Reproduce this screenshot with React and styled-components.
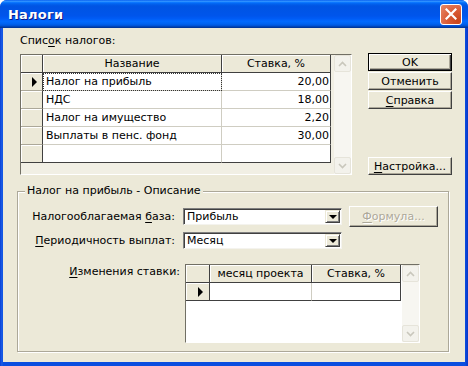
import React from "react";
import styled, { createGlobalStyle, css } from "styled-components";

const GlobalStyle = createGlobalStyle`
  html, body { margin: 0; padding: 0; background: #ffffff; }
  body { font-family: "DejaVu Sans", "Liberation Sans", sans-serif; font-size: 11px; color: #000; }
  * { box-sizing: border-box; }
`;

const Window = styled.div`
  width: 468px;
  height: 366px;
  display: flex;
  flex-direction: column;
  background: linear-gradient(to right, #0a3fd4 0px, #1c5fe8 2px, #0a4ee0 3px, #0a4ee0 465px, #0836c8 468px);
  border-radius: 7px 7px 0 0;
  overflow: hidden;
`;

const TitleBar = styled.div`
  height: 28px;
  flex: none;
  display: flex;
  align-items: center;
  justify-content: space-between;
  padding: 0 6px 0 8px;
  background: linear-gradient(
    to bottom,
    #0058ee 0%,
    #3593ff 4%,
    #288eff 6%,
    #127dff 8%,
    #036ffc 10%,
    #0262ee 14%,
    #0057e5 20%,
    #0054e3 24%,
    #0055eb 56%,
    #005bf5 66%,
    #026afe 76%,
    #0062ef 86%,
    #0052d6 92%,
    #0040ab 96%,
    #003092 100%
  );
`;

const Title = styled.span`
  color: #ffffff;
  font-weight: bold;
  font-size: 13px;
  font-family: "DejaVu Sans", "Liberation Sans", sans-serif;
  text-shadow: 1px 1px 0 #0a1883;
  letter-spacing: 0.2px;
`;

const CloseButton = styled.div`
  width: 22px;
  height: 21px;
  border: 1px solid #ffffff;
  border-radius: 3px;
  background: radial-gradient(circle at 85% 85%, #c8451b 0%, #d95b35 45%, #e88a6a 100%);
  display: flex;
  align-items: center;
  justify-content: center;
`;

const Client = styled.div`
  flex: 1;
  margin: 0 3px 4px 3px;
  background: #ece9d8;
  padding: 6px 0 0 14px;
  display: flex;
  flex-direction: column;
`;

const TopSection = styled.div`
  display: flex;
  gap: 16px;
  padding-left: 3px;
`;

const LeftCol = styled.div`
  width: 332px;
  display: flex;
  flex-direction: column;
`;

const Caption = styled.div`
  line-height: 14px;
  margin-bottom: 6px;
  white-space: nowrap;
`;

const ButtonCol = styled.div`
  width: 84px;
  display: flex;
  flex-direction: column;
  gap: 1px;
  padding-top: 19px;
`;

const Button = styled.button`
  width: ${(p) => p.$w || 84}px;
  height: ${(p) => p.$h || 18}px;
  padding: 0;
  margin: 0;
  font: inherit;
  font-size: 11px;
  color: #000;
  background: #ece9d8;
  border: 1px solid;
  border-color: #ffffff #404040 #404040 #ffffff;
  box-shadow: inset -1px -1px 0 #aca899;
  display: flex;
  align-items: center;
  justify-content: center;
  white-space: nowrap;
  ${(p) =>
    p.$default &&
    css`
      border-color: #000;
      box-shadow: inset 1px 1px 0 #fff, inset -1px -1px 0 #404040, inset -2px -2px 0 #aca899;
    `}
  ${(p) =>
    p.$bottom &&
    css`
      margin-top: auto;
    `}
  ${(p) =>
    p.disabled &&
    css`
      color: #aca899;
      text-shadow: 1px 1px 0 #ffffff;
    `}
`;

const U = styled.span`
  text-decoration: underline;
  text-underline-offset: 2px;
`;

const Grid = styled.div`
  width: ${(p) => p.$w}px;
  height: ${(p) => p.$h}px;
  display: flex;
  align-items: stretch;
  border: 1px solid;
  border-color: #716f64 #ffffff #ffffff #716f64;
  background: ${(p) => p.$bg};
`;

const DataArea = styled.div`
  display: grid;
  grid-template-columns: ${(p) => p.$cols};
  grid-auto-rows: 18px;
  align-self: flex-start;
  flex: none;
`;

const Filler = styled.div`
  flex: 1;
`;

const HeadCell = styled.div`
  background: #ece9d8;
  border-right: 1px solid #404040;
  border-bottom: 1px solid #404040;
  box-shadow: inset 1px 1px 0 #ffffff;
  display: flex;
  align-items: center;
  justify-content: center;
  white-space: nowrap;
  overflow: hidden;
`;

const IndicatorCell = styled.div`
  background: #ece9d8;
  border-right: 1px solid #404040;
  border-bottom: 1px solid ${(p) => (p.$last ? "#404040" : "#aca899")};
  box-shadow: inset 1px 1px 0 #ffffff;
  display: flex;
  align-items: center;
  justify-content: flex-end;
  padding-right: ${(p) => p.$pr || 5}px;
`;

const Arrow = styled.span`
  width: 0;
  height: 0;
  border-left: 5px solid #000;
  border-top: 5px solid transparent;
  border-bottom: 5px solid transparent;
`;

const DataCell = styled.div`
  background: #ffffff;
  border-right: 1px solid ${(p) => (p.$edge ? "#404040" : "#cfcdc2")};
  border-bottom: 1px solid ${(p) => (p.$last ? "#404040" : "#cfcdc2")};
  display: flex;
  align-items: center;
  justify-content: ${(p) => (p.$right ? "flex-end" : "flex-start")};
  padding: ${(p) => (p.$right ? "0 1px 0 0" : "0 0 0 3px")};
  white-space: nowrap;
  overflow: hidden;
  ${(p) =>
    p.$focus &&
    css`
      outline: 1px dotted #333;
      outline-offset: -1px;
    `}
`;

const ScrollBar = styled.div`
  width: 17px;
  flex: none;
  display: flex;
  flex-direction: column;
  justify-content: space-between;
  background: #f7f6f1;
`;

const ScrollBtn = styled.div`
  height: 17px;
  display: flex;
  align-items: center;
  justify-content: center;
  background: #f3f2ec;
  border: 1px solid #e6e4da;
  border-radius: 2px;
`;

const Group = styled.fieldset`
  margin: 9px 0 0 0;
  width: 432px;
  min-width: 0;
  padding: 0 0 8px 0;
  border: 1px solid #aca899;
  box-shadow: inset 1px 1px 0 #ffffff, 1px 1px 0 #ffffff;
`;

const Legend = styled.legend`
  margin-left: 7px;
  padding: 0 2px;
  line-height: 14px;
  background: #ece9d8;
  white-space: nowrap;
`;

const FormRow = styled.div`
  display: flex;
  align-items: ${(p) => (p.$top ? "flex-start" : "center")};
  gap: ${(p) => p.$gap}px;
  margin-top: ${(p) => p.$mt}px;
`;

const Label = styled.div`
  width: ${(p) => p.$w}px;
  text-align: right;
  line-height: 14px;
  white-space: nowrap;
  margin-top: ${(p) => p.$mt || 0}px;
`;

const Combo = styled.div`
  width: 159px;
  height: 17px;
  display: flex;
  background: #ffffff;
  border: 1px solid;
  border-color: #808080 #f4f3ee #f4f3ee #808080;
  padding: 1px;
  box-shadow: inset 1px 1px 0 #404040;
`;

const ComboText = styled.div`
  flex: 1;
  padding-left: 2px;
  display: flex;
  align-items: center;
  white-space: nowrap;
`;

const ComboArrow = styled.div`
  width: 15px;
  height: 100%;
  background: #ece9d8;
  border: 1px solid;
  border-color: #ece9d8 #404040 #404040 #ece9d8;
  box-shadow: inset 1px 1px 0 #ffffff, inset -1px -1px 0 #808080;
  display: flex;
  align-items: center;
  justify-content: center;
`;

const DownTri = styled.span`
  width: 0;
  height: 0;
  border-top: 4px solid #000;
  border-left: 4px solid transparent;
  border-right: 4px solid transparent;
`;

const Chevron = ({ up }) => (
  <svg width="9" height="6" viewBox="0 0 9 6">
    <path
      d={up ? "M1 5 L4.5 1.5 L8 5" : "M1 1 L4.5 4.5 L8 1"}
      fill="none"
      stroke="#c9c7bc"
      strokeWidth="1.6"
    />
  </svg>
);

const Scroll = () => (
  <ScrollBar>
    <ScrollBtn>
      <Chevron up />
    </ScrollBtn>
    <ScrollBtn>
      <Chevron />
    </ScrollBtn>
  </ScrollBar>
);

const taxes = [
  { name: "Налог на прибыль", rate: "20,00" },
  { name: "НДС", rate: "18,00" },
  { name: "Налог на имущество", rate: "2,20" },
  { name: "Выплаты в пенс. фонд", rate: "30,00" },
  { name: "", rate: "" },
];

const Combobox = ({ value }) => (
  <Combo>
    <ComboText>{value}</ComboText>
    <ComboArrow>
      <DownTri />
    </ComboArrow>
  </Combo>
);

export default function App() {
  return (
    <>
      <GlobalStyle />
      <Window>
        <TitleBar>
          <Title>Налоги</Title>
          <CloseButton>
            <svg width="12" height="12" viewBox="0 0 12 12">
              <path d="M1.5 1.5 L10.5 10.5 M10.5 1.5 L1.5 10.5" stroke="#fff" strokeWidth="2.2" strokeLinecap="square" />
            </svg>
          </CloseButton>
        </TitleBar>
        <Client>
          <TopSection>
            <LeftCol>
              <Caption>
                Спис<U>о</U>к налогов:
              </Caption>
              <Grid $w={332} $h={121} $bg="#f1efe4">
                <DataArea $cols="22px 179px 109px">
                  <HeadCell />
                  <HeadCell>Название</HeadCell>
                  <HeadCell>Ставка, %</HeadCell>
                  {taxes.map((t, i) => {
                    const last = i === taxes.length - 1;
                    return (
                      <React.Fragment key={i}>
                        <IndicatorCell $last={last}>{i === 0 && <Arrow />}</IndicatorCell>
                        <DataCell $last={last} $focus={i === 0}>
                          {t.name}
                        </DataCell>
                        <DataCell $last={last} $edge $right>
                          {t.rate}
                        </DataCell>
                      </React.Fragment>
                    );
                  })}
                </DataArea>
                <Filler />
                <Scroll />
              </Grid>
            </LeftCol>
            <ButtonCol>
              <Button $default>OK</Button>
              <Button>Отменить</Button>
              <Button>
                <U>С</U>правка
              </Button>
              <Button $bottom>
                <U>Н</U>астройка...
              </Button>
            </ButtonCol>
          </TopSection>
          <Group>
            <Legend>Налог на прибыль - Описание</Legend>
            <FormRow $mt={8} $gap={8}>
              <Label $w={157}>
                Налогооблагаемая <U>б</U>аза:
              </Label>
              <Combobox value="Прибыль" />
              <Button $w={89} $h={21} disabled style={{ marginLeft: -1 }}>
                <U>Ф</U>ормула...
              </Button>
            </FormRow>
            <FormRow $mt={5} $gap={8}>
              <Label $w={157}>
                <U>П</U>ериодичность выплат:
              </Label>
              <Combobox value="Месяц" />
            </FormRow>
            <FormRow $mt={15} $gap={5} $top>
              <Label $w={162} $mt={1}>
                <U>И</U>зменения ставки:
              </Label>
              <Grid $w={235} $h={79} $bg="#ffffff">
                <DataArea $cols="24px 102px 89px">
                  <HeadCell />
                  <HeadCell>месяц проекта</HeadCell>
                  <HeadCell>Ставка, %</HeadCell>
                  <IndicatorCell $last $pr={6}>
                    <Arrow />
                  </IndicatorCell>
                  <DataCell $last />
                  <DataCell $last $edge />
                </DataArea>
                <Filler />
                <Scroll />
              </Grid>
            </FormRow>
          </Group>
        </Client>
      </Window>
    </>
  );
}
